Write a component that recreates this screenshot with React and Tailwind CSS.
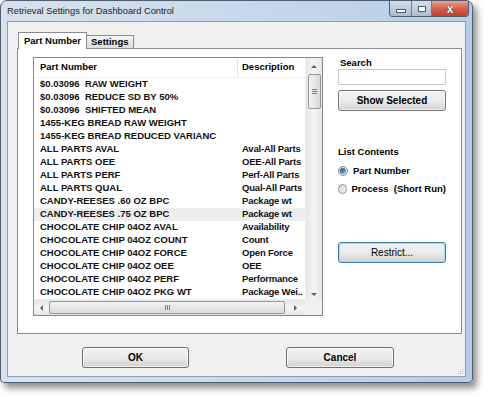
import React from 'react'

const rows = [
  ['$0.03096  RAW WEIGHT', ''],
  ['$0.03096  REDUCE SD BY 50%', ''],
  ['$0.03096  SHIFTED MEAN', ''],
  ['1455-KEG BREAD RAW WEIGHT', ''],
  ['1455-KEG BREAD REDUCED VARIANC', ''],
  ['ALL PARTS AVAL', 'Aval-All Parts'],
  ['ALL PARTS OEE', 'OEE-All Parts'],
  ['ALL PARTS PERF', 'Perf-All Parts'],
  ['ALL PARTS QUAL', 'Qual-All Parts'],
  ['CANDY-REESES .60 OZ BPC', 'Package wt'],
  ['CANDY-REESES .75 OZ BPC', 'Package wt'],
  ['CHOCOLATE CHIP 04OZ AVAL', 'Availability'],
  ['CHOCOLATE CHIP 04OZ COUNT', 'Count'],
  ['CHOCOLATE CHIP 04OZ FORCE', 'Open Force'],
  ['CHOCOLATE CHIP 04OZ OEE', 'OEE'],
  ['CHOCOLATE CHIP 04OZ PERF', 'Performance'],
  ['CHOCOLATE CHIP 04OZ PKG WT', 'Package Wei..'],
]

function Arrow({ dir }) {
  const pts = {
    up: '1,4 4,1 7,4',
    down: '1,1 4,4 7,1',
    left: '4,1 1,4 4,7',
    right: '1,1 4,4 1,7',
  }
  const vertical = dir === 'up' || dir === 'down'
  return (
    <svg width={vertical ? 8 : 5} height={vertical ? 5 : 8} viewBox={vertical ? '0 0 8 5' : '0 0 5 8'}>
      <polygon points={pts[dir]} fill="#606060" />
    </svg>
  )
}

function WinButton({ children, className = '' }) {
  return (
    <button
      className={`h-[21px] rounded-[3px] border border-[#707070] bg-gradient-to-b from-[#f2f2f2] via-[#ebebeb] to-[#d2d2d2] text-[10px] font-bold text-black shadow-[inset_0_0_0_1px_rgba(255,255,255,0.7)] ${className}`}
    >
      {children}
    </button>
  )
}

function Radio({ checked, label }) {
  return (
    <div className="flex items-center gap-[5px] h-[18px]">
      <span className="w-[10px] h-[10px] rounded-full border border-[#8e8f8f] bg-gradient-to-br from-[#d0d0d0] to-[#f8f8f8] flex items-center justify-center">
        {checked && <span className="w-[6px] h-[6px] rounded-full bg-gradient-to-br from-[#1d4f7e] via-[#3a86c2] to-[#8fd0f3]" />}
      </span>
      <span className="text-[9.5px] font-bold whitespace-pre">{label}</span>
    </div>
  )
}

export default function App() {
  return (
    <div className="w-[489px] h-[397px] bg-white font-['Liberation_Sans',Arial,sans-serif] text-black">
      <div className="w-[473px] h-[383px] flex flex-col rounded-t-[7px] rounded-b-[4px] border border-[#4f5c6c] bg-gradient-to-r from-[#d7e2ed] via-[#c8d9eb] to-[#b7cde6] shadow-[4px_5px_7px_rgba(0,0,0,0.45)]">
        {/* Title bar */}
        <div className="h-[20px] flex items-start justify-between pl-[6px] pr-[3px]">
          <span className="mt-[5px] text-[9.3px] leading-[11px] text-[#1b1b1b]">
            Retrieval Settings for Dashboard Control
          </span>
          <div className="flex h-[16px] rounded-b-[4px] border border-t-0 border-[#4f5c6c] overflow-hidden">
            <div className="w-[22px] flex items-center justify-center bg-gradient-to-b from-[#d3deea] to-[#a9bcd3] border-r border-[#6d7d90]">
              <span className="w-[8px] h-[2px] mt-[5px] bg-white border border-[#4f5c6c] box-content" />
            </div>
            <div className="w-[20px] flex items-center justify-center bg-gradient-to-b from-[#d3deea] to-[#a9bcd3] border-r border-[#6d7d90]">
              <span className="w-[6px] h-[4px] border-[2px] border-white outline outline-1 outline-[#4f5c6c]" />
            </div>
            <div className="w-[36px] flex items-center justify-center bg-gradient-to-b from-[#e8a493] via-[#d2604c] to-[#c4402f]">
              <span className="text-[12px] leading-none font-bold text-white [text-shadow:0_0_1px_#4a1a12,0_0_1px_#4a1a12]">x</span>
            </div>
          </div>
        </div>

        {/* Client area */}
        <div className="flex-1 flex px-[6px] pb-[5px]">
          <div className="flex-1 flex flex-col border border-[#8a9db4] bg-[#f0f0f0] pt-[10px] pl-[9px] relative">
            {/* Tabs */}
            <div className="flex items-end h-[16px] pl-[1px]">
              <div className="h-[17px] px-[5px] -mb-px z-10 bg-white border border-b-0 border-[#898c95] flex items-center text-[9.5px] font-bold">
                Part Number
              </div>
              <div className="h-[13px] px-[4px] bg-gradient-to-b from-[#f4f4f4] to-[#dcdcdc] border border-l-0 border-b-0 border-[#898c95] flex items-center text-[9.5px] font-bold">
                Settings
              </div>
            </div>

            {/* Tab page */}
            <div className="w-[445px] h-[286px] border border-[#898c95] bg-white flex pl-[15px] pt-[8px]">
              {/* List view */}
              <div className="w-[290px] h-[259px] border border-[#828790] flex flex-col">
                <div className="flex flex-1 min-h-0">
                  <div className="flex-1 flex flex-col overflow-hidden">
                    <div className="h-[20px] flex text-[9.5px] font-bold border-b border-[#f0f0f0]">
                      <div className="w-[204px] shrink-0 pl-[6px] flex items-center border-r border-[#e3e3e3]">Part Number</div>
                      <div className="flex-1 pl-[4px] flex items-center whitespace-nowrap">Description</div>
                    </div>
                    {rows.map(([part, desc], i) => (
                      <div
                        key={i}
                        className={`h-[13px] flex items-center text-[9.5px] font-bold text-[#111] ${i === 10 ? 'bg-[#eeeeee]' : ''}`}
                      >
                        <div className="w-[204px] shrink-0 pl-[6px] whitespace-pre">{part}</div>
                        <div className="flex-1 pl-[4px] whitespace-nowrap tracking-[-0.2px]">{desc}</div>
                      </div>
                    ))}
                  </div>
                  {/* Vertical scrollbar */}
                  <div className="w-[17px] flex flex-col items-center bg-gradient-to-r from-[#e6e6e6] via-[#f4f4f4] to-[#e6e6e6] border-l border-[#ececec]">
                    <div className="h-[16px] flex items-center justify-center"><Arrow dir="up" /></div>
                    <div className="w-[13px] h-[35px] rounded-[2px] border border-[#979797] bg-gradient-to-r from-[#f4f4f4] to-[#d8d8d8] flex flex-col items-center justify-center gap-[1px]">
                      <span className="w-[5px] h-px bg-[#7a7a7a]" />
                      <span className="w-[5px] h-px bg-[#7a7a7a]" />
                      <span className="w-[5px] h-px bg-[#7a7a7a]" />
                    </div>
                    <div className="flex-1" />
                    <div className="h-[10px] flex items-center justify-center"><Arrow dir="down" /></div>
                  </div>
                </div>
                {/* Horizontal scrollbar */}
                <div className="h-[16px] flex">
                  <div className="flex-1 flex items-center bg-gradient-to-b from-[#e6e6e6] via-[#f4f4f4] to-[#e6e6e6] border-t border-[#ececec]">
                    <div className="w-[15px] flex justify-center"><Arrow dir="left" /></div>
                    <div className="w-[236px] h-[13px] rounded-[2px] border border-[#979797] bg-gradient-to-b from-[#f4f4f4] to-[#d8d8d8] flex items-center justify-center gap-[1px]">
                      <span className="w-px h-[5px] bg-[#7a7a7a]" />
                      <span className="w-px h-[5px] bg-[#7a7a7a]" />
                      <span className="w-px h-[5px] bg-[#7a7a7a]" />
                    </div>
                    <div className="flex-1 flex justify-center"><Arrow dir="right" /></div>
                  </div>
                  <div className="w-[17px] bg-[#f0f0f0]" />
                </div>
              </div>

              {/* Right column */}
              <div className="ml-[15px] w-[108px] flex flex-col">
                <div className="h-[12px] flex items-center pl-[2px] text-[9.5px] font-bold">Search</div>
                <div className="h-[16px] border border-[#c5c8cf] bg-white" />
                <WinButton className="mt-[5px] w-[108px] h-[20px]">Show Selected</WinButton>
                <div className="mt-[35px] h-[12px] flex items-center text-[9.5px] font-bold">List Contents</div>
                <div className="mt-[4px]">
                  <Radio checked label="Part Number" />
                  <Radio label="Process  (Short Run)" />
                </div>
                <button className="mt-[44px] w-[108px] h-[21px] rounded-[3px] border border-[#3c7fb1] bg-gradient-to-b from-[#f2f2f2] via-[#ebebeb] to-[#d2d2d2] shadow-[inset_0_0_0_1px_#a6d9f4] text-[10px]">
                  Restrict...
                </button>
              </div>
            </div>

            {/* Dialog buttons */}
            <div className="flex mt-[13px] pl-[65px]">
              <WinButton className="w-[107px]">OK</WinButton>
              <WinButton className="ml-[97px] w-[108px]">Cancel</WinButton>
            </div>

            {/* Resize grip */}
            <div className="absolute right-[2px] bottom-[2px] grid grid-cols-3 gap-[1px]">
              {[0, 1, 2, 3, 4, 5, 6, 7, 8].map((n) => (
                <span key={n} className={`w-[1px] h-[1px] ${[2, 4, 5, 6, 7, 8].includes(n) ? 'bg-[#b8b8b8]' : ''}`} />
              ))}
            </div>
          </div>
        </div>
      </div>
    </div>
  )
}
